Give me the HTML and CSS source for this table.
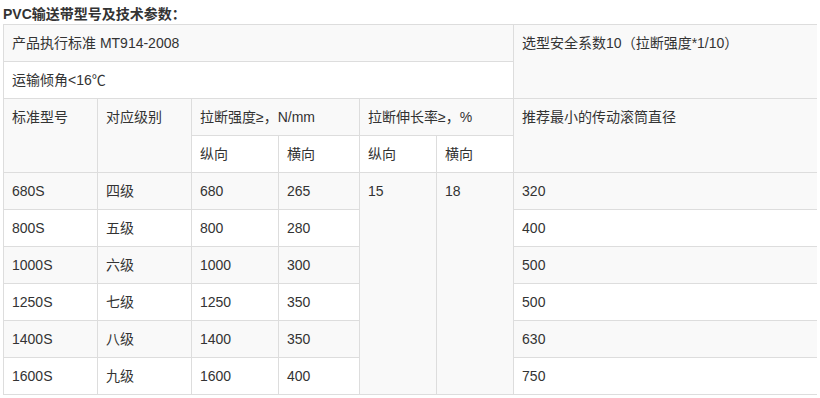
FILE: index.html
```html
<!DOCTYPE html>
<html lang="zh">
<head>
<meta charset="utf-8">
<title>PVC输送带型号及技术参数</title>
<link rel="stylesheet" href="styles.css">
</head>
<body>
<p class="title">PVC输送带型号及技术参数：</p>
<table class="spec">
  <colgroup>
    <col class="c1"><col class="c2"><col class="c3"><col class="c4"><col class="c5"><col class="c6"><col class="c7">
  </colgroup>
  <tbody>
    <tr class="odd">
      <td colspan="6">产品执行标准 MT914-2008</td>
      <td rowspan="2">选型安全系数10（拉断强度*1/10）</td>
    </tr>
    <tr class="even">
      <td colspan="6">运输倾角&lt;16℃</td>
    </tr>
    <tr class="odd">
      <td rowspan="2">标准型号</td>
      <td rowspan="2">对应级别</td>
      <td colspan="2">拉断强度≥，N/mm</td>
      <td colspan="2">拉断伸长率≥，%</td>
      <td rowspan="2">推荐最小的传动滚筒直径</td>
    </tr>
    <tr class="even">
      <td>纵向</td><td>横向</td><td>纵向</td><td>横向</td>
    </tr>
    <tr class="odd">
      <td>680S</td><td>四级</td><td>680</td><td>265</td>
      <td rowspan="6">15</td><td rowspan="6">18</td>
      <td>320</td>
    </tr>
    <tr class="even">
      <td>800S</td><td>五级</td><td>800</td><td>280</td><td>400</td>
    </tr>
    <tr class="odd">
      <td>1000S</td><td>六级</td><td>1000</td><td>300</td><td>500</td>
    </tr>
    <tr class="even">
      <td>1250S</td><td>七级</td><td>1250</td><td>350</td><td>500</td>
    </tr>
    <tr class="odd">
      <td>1400S</td><td>八级</td><td>1400</td><td>350</td><td>630</td>
    </tr>
    <tr class="even">
      <td>1600S</td><td>九级</td><td>1600</td><td>400</td><td>750</td>
    </tr>
  </tbody>
</table>
</body>
</html>
```
FILE: styles.css
```css
html, body {
  background: #fff;
}
body {
  margin: 4px 3px;
  font-family: "Liberation Sans", Arial, "Noto Sans CJK SC", sans-serif;
  font-size: 14px;
  line-height: 20px;
  color: #333;
}
.title {
  margin: 0;
  font-weight: bold;
  line-height: 20px;
}
.spec {
  border-collapse: collapse;
  border-spacing: 0;
  table-layout: fixed;
  width: 815px;
  border: 1px solid #ddd;
}
.c1 { width: 94px; }
.c2 { width: 94px; }
.c3 { width: 87px; }
.c4 { width: 81px; }
.c5 { width: 77px; }
.c6 { width: 77px; }
.c7 { width: 305px; }
.spec td {
  border: 1px solid #ddd;
  padding: 8px;
  vertical-align: top;
  line-height: 20px;
  text-align: left;
}
.spec tr.odd td {
  background: #f9f9f9;
}
.spec tr.even td {
  background: #fff;
}
```
